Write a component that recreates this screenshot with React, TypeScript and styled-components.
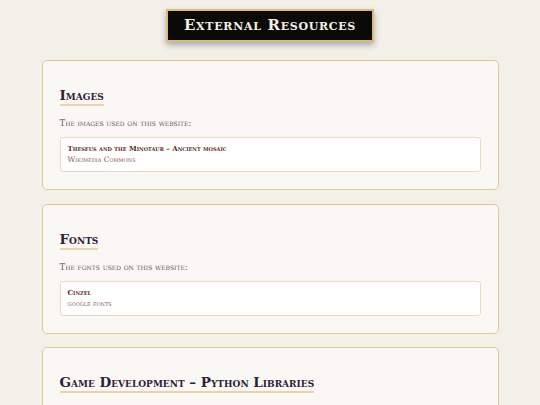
import styled, { createGlobalStyle } from "styled-components";

const GlobalStyle = createGlobalStyle`
  body {
    margin: 0;
    background: #f3f0ea;
    font-family: "DejaVu Serif", "Liberation Serif", serif;
    font-variant: small-caps;
  }
`;

type Item = { title: string; source: string };
type Section = { heading: string; intro: string; items: Item[] };

const sections: Section[] = [
  {
    heading: "Images",
    intro: "The images used on this website:",
    items: [
      { title: "Theseus and the Minotaur – Ancient mosaic", source: "Wikimedia Commons" },
    ],
  },
  {
    heading: "Fonts",
    intro: "The fonts used on this website:",
    items: [{ title: "Cinzel", source: "google fonts" }],
  },
  {
    heading: "Game Development – Python Libraries",
    intro: "The libraries used to build the game:",
    items: [{ title: "Pygame", source: "pygame.org" }],
  },
];

function App() {
  return (
    <>
      <GlobalStyle />
      <Page>
        <Banner>External Resources</Banner>
        {sections.map((s) => (
          <Card key={s.heading}>
            <Heading>{s.heading}</Heading>
            <Intro>{s.intro}</Intro>
            {s.items.map((it) => (
              <Entry key={it.title}>
                <EntryTitle>{it.title}</EntryTitle>
                <EntrySource>{it.source}</EntrySource>
              </Entry>
            ))}
          </Card>
        ))}
      </Page>
    </>
  );
}

export default App;

const Page = styled.div`
  display: flex;
  flex-direction: column;
  align-items: center;
  gap: 13.5px;
  padding: 9px 0 20px;
`;

const Banner = styled.h1`
  margin: 0 0 4.5px;
  padding: 5px 16px 6px;
  background: #0b0a09;
  border: 2px solid #d9bc78;
  box-shadow: 0 3px 6px rgba(0, 0, 0, 0.3);
  color: #f4efe4;
  font-size: 15px;
  font-weight: bold;
  letter-spacing: 0.7px;
  line-height: 18px;
`;

const Card = styled.section`
  box-sizing: border-box;
  width: 457px;
  padding: 24px 17px 17px;
  background: #faf8f5;
  border: 1.5px solid #e2c98f;
  border-radius: 5px;
`;

const Heading = styled.h2`
  display: inline-block;
  margin: 0;
  padding-bottom: 1px;
  border-bottom: 2px solid #e8d4a4;
  color: #2b2238;
  font-size: 13.5px;
  font-weight: bold;
  line-height: 16px;
`;

const Intro = styled.p`
  margin: 12px 0 8px;
  color: #5d5861;
  font-size: 8.5px;
  line-height: 11px;
`;

const Entry = styled.div`
  padding: 5px 7px 6px;
  background: #ffffff;
  border: 1px solid #ecdcbf;
  border-radius: 3px;
`;

const EntryTitle = styled.div`
  color: #5a2c1e;
  font-size: 7px;
  font-weight: bold;
  line-height: 11px;
`;

const EntrySource = styled.div`
  color: #8c5e4e;
  font-size: 7.5px;
  line-height: 11px;
`;
